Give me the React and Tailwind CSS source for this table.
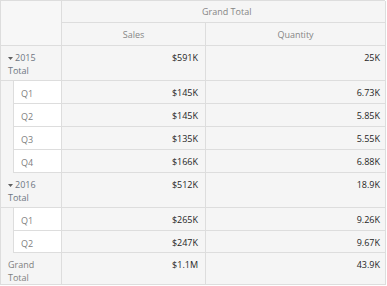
const rows = [
  { label: "2015", total: true, sales: "$591K", qty: "25K", h: "h-[35px]" },
  { label: "Q1", sales: "$145K", qty: "6.73K", h: "h-[23px]" },
  { label: "Q2", sales: "$145K", qty: "5.85K", h: "h-[23px]" },
  { label: "Q3", sales: "$135K", qty: "5.55K", h: "h-[23px]" },
  { label: "Q4", sales: "$166K", qty: "6.88K", h: "h-[23px]" },
  { label: "2016", total: true, sales: "$512K", qty: "18.9K", h: "h-[35px]" },
  { label: "Q1", sales: "$265K", qty: "9.26K", h: "h-[23px]" },
  { label: "Q2", sales: "$247K", qty: "9.67K", h: "h-[22px]" },
];

function Caret() {
  return (
    <svg width="5" height="3" viewBox="0 0 5 3" className="mr-[2px] inline-block align-middle">
      <path d="M0 0h5L2.5 3z" fill="#5f5f5f" />
    </svg>
  );
}

function DataCells({ sales, qty }) {
  return (
    <>
      <div className="w-[144px] shrink-0 border-r border-b border-[#dddddd] bg-[#f5f5f5] px-[7px] pt-[5px] text-right text-[#262626]">
        {sales}
      </div>
      <div className="w-[180px] shrink-0 border-r border-b border-[#dddddd] bg-[#f5f5f5] px-[5px] pt-[5px] text-right text-[#262626]">
        {qty}
      </div>
    </>
  );
}

export default function App() {
  return (
    <div className="h-[286px] w-[387px] bg-white">
      <div
        className="w-[385px] border-l border-t border-[#dddddd] text-[9px] leading-[13px]"
        style={{ fontFamily: '"Open Sans", "Noto Sans", sans-serif' }}
      >
        <div className="flex">
          <div className="w-[61px] shrink-0 border-r border-b border-[#dddddd] bg-[#f7f7f7]" />
          <div className="flex flex-col">
            <div className="flex h-[22px] w-[324px] items-center border-r border-b border-[#dddddd] bg-[#f5f5f5] pl-[140px] text-[#858585]">
              Grand Total
            </div>
            <div className="flex h-[23px]">
              <div className="flex w-[144px] items-center justify-center border-r border-b border-[#dddddd] bg-[#f5f5f5] text-[#858585]">
                Sales
              </div>
              <div className="flex w-[180px] items-center justify-center border-r border-b border-[#dddddd] bg-[#f5f5f5] text-[#858585]">
                Quantity
              </div>
            </div>
          </div>
        </div>

        {rows.map((r, i) => (
          <div key={i} className={`flex ${r.h}`}>
            {r.total ? (
              <div className="w-[61px] shrink-0 border-r border-b border-[#dddddd] bg-[#f5f5f5] px-[7px] pt-[5px] text-[#6e7582]">
                <div>
                  <Caret />
                  {r.label}
                </div>
                <div>Total</div>
              </div>
            ) : (
              <div className="flex w-[61px] shrink-0 border-r border-[#dddddd] bg-[#f5f5f5]">
                <div className="w-[12px] shrink-0" />
                <div className="flex-1 border-l border-b border-[#dddddd] bg-white pl-[7px] pt-[6px] text-[#808080]">
                  {r.label}
                </div>
              </div>
            )}
            <DataCells sales={r.sales} qty={r.qty} />
          </div>
        ))}

        <div className="flex h-[32px]">
          <div className="w-[61px] shrink-0 border-r border-b border-[#dddddd] bg-[#f5f5f5] px-[7px] pt-[5px] text-[#808080]">
            <div>Grand</div>
            <div>Total</div>
          </div>
          <DataCells sales="$1.1M" qty="43.9K" />
        </div>
      </div>
    </div>
  );
}
